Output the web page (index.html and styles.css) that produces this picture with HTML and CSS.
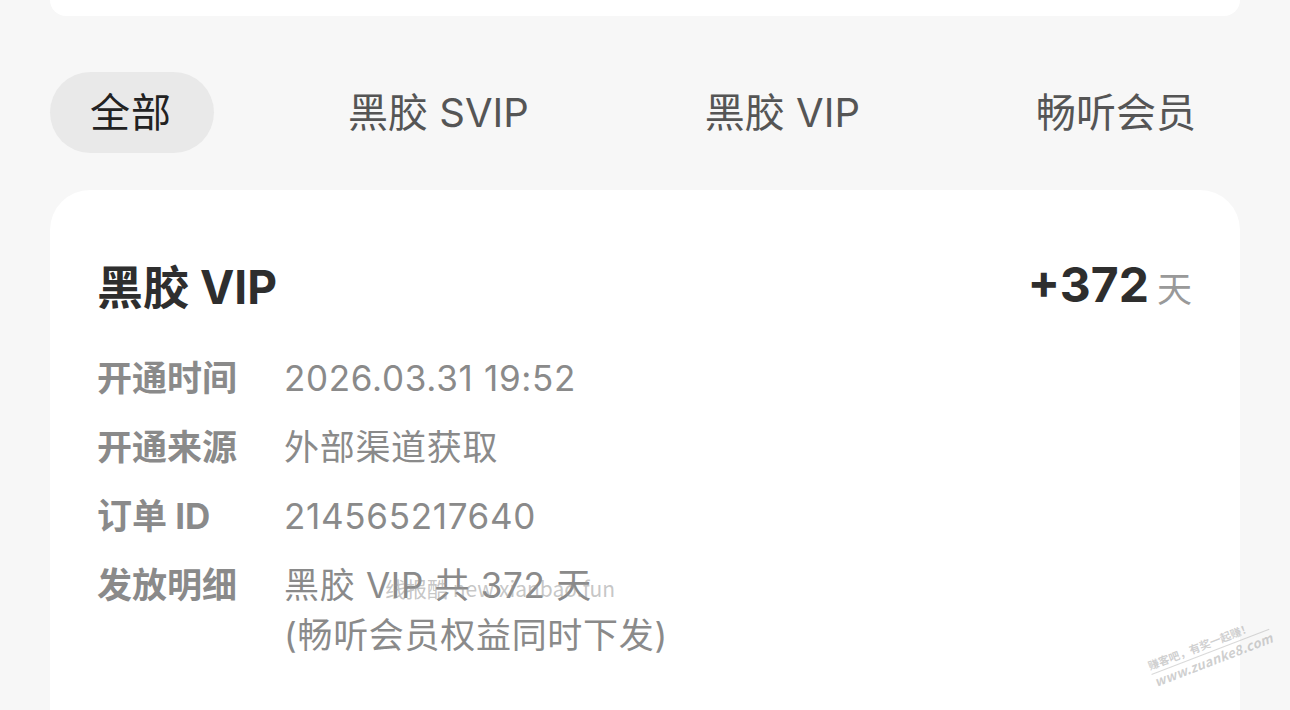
FILE: index.html
```html
<!DOCTYPE html>
<html lang="zh-CN">
<head>
<meta charset="utf-8">
<title>会员记录</title>
<link rel="stylesheet" href="styles.css">
</head>
<body>
<div class="top-card"></div>
<nav class="tabs">
  <div class="tab active">全部</div>
  <div class="tab">黑胶 SVIP</div>
  <div class="tab">黑胶 VIP</div>
  <div class="tab">畅听会员</div>
</nav>
<section class="card">
  <div class="card-head">
    <h2 class="card-title">黑胶 VIP</h2>
    <div class="days"><span class="days-num">+372</span><span class="days-unit">天</span></div>
  </div>
  <dl class="info">
    <div class="row"><dt>开通时间</dt><dd>2026.03.31 19:52</dd></div>
    <div class="row"><dt>开通来源</dt><dd>外部渠道获取</dd></div>
    <div class="row"><dt>订单 ID</dt><dd>214565217640</dd></div>
    <div class="row"><dt>发放明细</dt><dd>黑胶 VIP 共 372 天<br>(畅听会员权益同时下发)</dd></div>
  </dl>
  <div class="wm-line">线报酷 new.xianbao.fun</div>
  <div class="wm-stamp"><div class="wm-a">赚客吧，有奖一起赚！</div><div class="wm-b">www.zuanke8.com</div></div>
</section>
</body>
</html>
```
FILE: styles.css
```css
* { box-sizing: border-box; }
html, body { margin: 0; padding: 0; }
body {
  background: #f7f7f7;
  font-family: Inter, "Noto Sans CJK SC", sans-serif;
  color: #333;
  width: 1290px;
  height: 710px;
  overflow: hidden;
}
.top-card {
  margin: 0 50px;
  height: 16px;
  background: #fff;
  border-radius: 0 0 30px 30px;
}
.tabs {
  margin-top: 56px;
  padding: 0 52px 0 50px;
  display: flex;
  justify-content: space-between;
  align-items: center;
}
.tab {
  height: 81px;
  padding: 0 42px 6px 40px;
  display: flex;
  align-items: center;
  font-size: 40px;
  color: #555;
  border-radius: 41px;
}
.tab.active {
  background: #e9e9e9;
  color: #222;
  letter-spacing: 1px;
}
.card {
  position: relative;
  margin: 37px 50px 0;
  background: #fff;
  border-radius: 40px;
  padding: 66px 48px 40px 47px;
  height: 600px;
}
.card-head {
  display: flex;
  justify-content: space-between;
  align-items: center;
  height: 56px;
}
.card-title {
  margin: 0;
  font-size: 46px;
  font-weight: 700;
  color: #2e2e2e;
}
.days { display: flex; align-items: baseline; gap: 8px; }
.days-num { font-size: 48px; font-weight: 700; color: #2e2e2e; }
.days-unit { font-size: 35px; color: #999; }
.info {
  margin: 41px 0 0;
  display: flex;
  flex-direction: column;
  gap: 19px;
}
.row {
  display: flex;
  line-height: 50px;
  font-size: 35px;
}
.row dt {
  width: 187px;
  flex: none;
  font-weight: 700;
  color: #8a8a8a;
}
.row dd {
  margin: 0;
  color: #8a8a8a;
  letter-spacing: 0.7px;
}
.wm-line {
  position: absolute;
  left: 335px;
  top: 383px;
  font-size: 21px;
  color: rgba(150,150,150,0.55);
  font-family: "Noto Sans CJK SC", sans-serif;
}
.wm-stamp {
  position: absolute;
  left: 1096px;
  top: 470px;
  transform: rotate(-21deg);
  transform-origin: left top;
  color: rgba(160,160,160,0.5);
  font-size: 11px;
  font-weight: 700;
  font-family: "Noto Sans CJK SC", sans-serif;
  line-height: 1.25;
}
.wm-a { border-bottom: 1px solid rgba(160,160,160,0.4); padding-bottom: 1px; }
.wm-b { font-size: 13px; font-style: italic; letter-spacing: 0.3px; }
```
